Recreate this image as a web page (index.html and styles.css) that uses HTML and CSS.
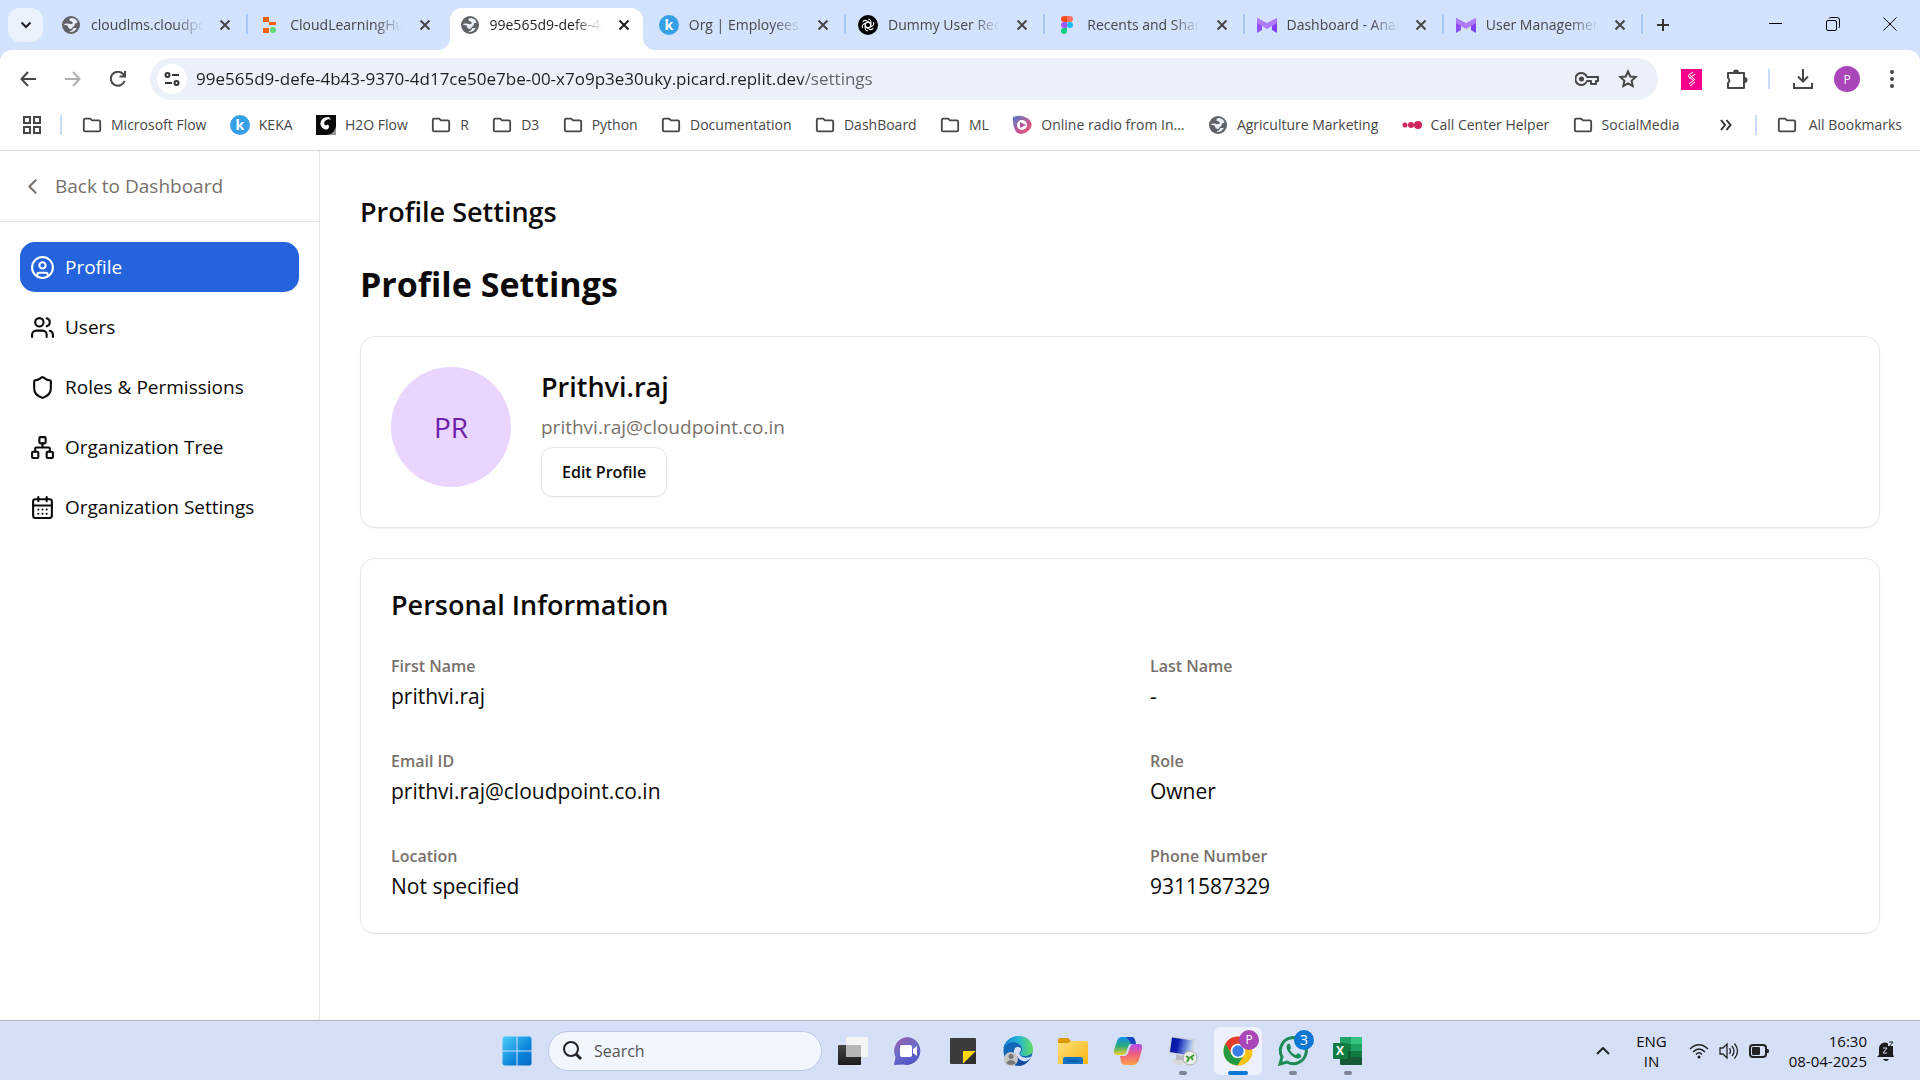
FILE: index.html
```html
<!DOCTYPE html>
<html lang="en">
<head>
<meta charset="utf-8">
<title>Profile Settings</title>
<link rel="stylesheet" href="styles.css">
</head>
<body>
<svg class="sprite" aria-hidden="true">
  <symbol id="globe" viewBox="0 0 20 20"><circle cx="10" cy="10" r="9" fill="#5f6368"/><path d="M11 3C8.500 3 8 4.500 8.600 5.500c.6 1 2.400.7 3 1.700.5 1-.5 2-2 2-1.400 0-2.200-.6-3.600-.6-1.600 0-2.600.4-3 1.400 1.600.2 2.600 0 3.600.8 1 .9.300 2.200 1.600 2.800 1.500.6 3 .3 3.300-1 .3-1.200 1.700-1 2.200-2 .3-.8-.4-1.400.3-2 .8-.6 2.200-.2 2.600-1.300C15.800 5 13.500 3.200 11 3z" fill="#e9eef8"/><path d="M8.500 17c.4-1.200 1.600-1 2.500-1.600.9-.7.6-1.900 1.700-2.300 1.300-.4 2.200.3 3.300-.6-1 2.700-3.700 4.900-7.500 4.500z" fill="#e9eef8"/></symbol>
  <symbol id="folder" viewBox="0 0 22 18"><path d="M2 3.500V14.500A1.500 1.500 0 0 0 3.500 16h15a1.500 1.500 0 0 0 1.500-1.500v-9A1.500 1.500 0 0 0 18.500 4H11L9 2H3.500A1.500 1.500 0 0 0 2 3.500z" fill="none" stroke="#474747" stroke-width="2"/></symbol>
  <symbol id="close" viewBox="0 0 12 12"><path d="M1.500 1.500l9 9M10.500 1.500l-9 9" stroke="currentColor" stroke-width="2" fill="none"/></symbol>
  <symbol id="ribbon" viewBox="0 0 20 16"><path d="M0 1l5 3v9l-5 3z" fill="#8f50f5"/><path d="M20 1l-5 3v9l5 3z" fill="#7f3ff2"/><path d="M0 1l10 5 10-5v5l-10 6L0 6z" fill="#b07bfa"/></symbol>
</svg>

<header class="browser">
  <div class="tabstrip">
    <button class="tab-search" aria-label="Search tabs"><svg width="12" height="8" viewBox="0 0 12 8"><path d="M1.500 1.500L6 6l4.500-4.500" fill="none" stroke="#1f1f1f" stroke-width="2"/></svg></button>
    <nav class="tabs">
      <div class="tab"><svg class="fav"><use href="#globe"/></svg><a href="#">cloudlms.cloudpoint</a><button aria-label="Close tab"><svg><use href="#close"/></svg></button></div>
      <div class="tab no-line"><svg class="fav" viewBox="0 0 20 20"><path d="M3 2h6v5H3zM9 7h7v3H9zM3 13h6v5H3z" fill="#f26207"/><circle cx="13" cy="15" r="3" fill="#5fd97c"/></svg><a href="#">CloudLearningHub</a><button aria-label="Close tab"><svg><use href="#close"/></svg></button></div>
      <div class="tab active"><svg class="fav"><use href="#globe"/></svg><a href="#">99e565d9-defe-4b43</a><button aria-label="Close tab"><svg><use href="#close"/></svg></button></div>
      <div class="tab"><span class="fav keka">k</span><a href="#">Org | Employees D</a><button aria-label="Close tab"><svg><use href="#close"/></svg></button></div>
      <div class="tab"><svg class="fav" viewBox="0 0 20 20"><circle cx="10" cy="10" r="10"/><g fill="none" stroke="#fff"><path id="petal" d="M10 4a3 3 0 0 1 3 3v4l-3 2"/><use href="#petal" transform="rotate(60 10 10)"/><use href="#petal" transform="rotate(120 10 10)"/><use href="#petal" transform="rotate(180 10 10)"/><use href="#petal" transform="rotate(240 10 10)"/><use href="#petal" transform="rotate(300 10 10)"/></g></svg><a href="#">Dummy User Records</a><button aria-label="Close tab"><svg><use href="#close"/></svg></button></div>
      <div class="tab"><svg class="fav" viewBox="0 0 20 20"><path d="M10 1H7a3 3 0 0 0 0 6h3z" fill="#f24e1e"/><path d="M10 1h3a3 3 0 0 1 0 6h-3z" fill="#ff7262"/><path d="M10 7H7a3 3 0 0 0 0 6h3z" fill="#a259ff"/><circle cx="13" cy="10" r="3" fill="#1abcfe"/><path d="M10 13H7a3 3 0 1 0 3 3z" fill="#0acf83"/></svg><a href="#">Recents and Shared</a><button aria-label="Close tab"><svg><use href="#close"/></svg></button></div>
      <div class="tab"><svg class="fav"><use href="#ribbon"/></svg><a href="#">Dashboard - Analytics</a><button aria-label="Close tab"><svg><use href="#close"/></svg></button></div>
      <div class="tab"><svg class="fav"><use href="#ribbon"/></svg><a href="#">User Management</a><button aria-label="Close tab"><svg><use href="#close"/></svg></button></div>
    </nav>
    <button class="new-tab" aria-label="New tab"><svg width="14" height="14" viewBox="0 0 14 14"><path d="M7 1v12M1 7h12" stroke="#333" stroke-width="2"/></svg></button>
    <div class="window-controls">
      <button aria-label="Minimize"><svg width="14" height="14" viewBox="0 0 14 14"><path d="M0 6.500h13" stroke="#000"/></svg></button>
      <button aria-label="Restore"><svg width="14" height="14" viewBox="0 0 14 14" fill="none" stroke="#000"><rect x=".5" y="3.500" width="10" height="10" rx="1.500"/><path d="M3 1.500Q3.500.5 5 .5h6A2.500 2.500 0 0 1 13.500 3v6q0 1.500-1 2"/></svg></button>
      <button aria-label="Close"><svg width="14" height="14" viewBox="0 0 14 14"><path d="M.5.5l13 13M13.500.5l-13 13" stroke="#000"/></svg></button>
    </div>
  </div>

  <div class="toolbar">
    <button aria-label="Back"><svg width="16" height="16" viewBox="0 0 16 16"><path d="M16 8H1.500M8 1L1.500 8 8 15" fill="none" stroke="#474747" stroke-width="2"/></svg></button>
    <button aria-label="Forward"><svg width="16" height="16" viewBox="0 0 16 16"><path d="M0 8h14.500M8 1l6.500 7L8 15" fill="none" stroke="#b0b0b0" stroke-width="2"/></svg></button>
    <button aria-label="Reload"><svg width="16" height="16" viewBox="0 0 16 16"><path d="M14.500 10A7 7 0 1 1 13 3l2 2M15 0v5.500H9.500" fill="none" stroke="#474747" stroke-width="2"/></svg></button>
    <div class="omnibox">
      <button class="site-info" aria-label="View site information"><svg width="16" height="16" viewBox="0 0 16 16" fill="none" stroke="#333" stroke-width="2"><circle cx="3.500" cy="4" r="2"/><path d="M8 4h7M1 12h7"/><circle cx="12.500" cy="12" r="2"/></svg></button>
      <input class="url" type="text" aria-label="Address" value="99e565d9-defe-4b43-9370-4d17ce50e7be-00-x7o9p3e30uky.picard.replit.dev/settings">
      <button aria-label="Passwords"><svg width="24" height="16" viewBox="0 0 24 16" fill="none" stroke="#474747" stroke-width="2"><path d="M12 6a6 6 0 1 0 0 4h4v3h5v-3h2V6z" stroke-linejoin="round"/><circle cx="6.500" cy="8" r="1.500" fill="#474747"/></svg></button>
      <button aria-label="Bookmark"><svg width="20" height="20" viewBox="0 0 20 20"><path d="M10 2.500l2.300 5 5.300.6-4 3.700 1.100 5.300L10 14.400l-4.700 2.700 1.100-5.300-4-3.700 5.300-.6z" fill="none" stroke="#474747" stroke-width="2"/></svg></button>
    </div>
    <button aria-label="Extension"><svg width="21" height="21" viewBox="0 0 21 21"><path d="M0 0h21v21H0z" fill="#f7008e"/><path d="M12 3L7 6.500M14 5L8 9.500M7 7l6 5M9 6.500l5 4.500M13 11l-5 4M14 13l-5 4" fill="none" stroke="#fff" stroke-width="1"/></svg></button>
    <button aria-label="Extensions"><svg width="22" height="22" viewBox="0 0 22 22"><path d="M2 5h16v15H2v-5a3 3 0 0 0 0-5z" fill="none" stroke="#474747" stroke-width="2" stroke-linejoin="round"/><path d="M7 4.500q0-3 3-3t3 3zM18.500 9q3 0 3 3t-3 3z" fill="#474747"/></svg></button>
    <span class="divider"></span>
    <button aria-label="Downloads"><svg width="22" height="22" viewBox="0 0 22 22"><path d="M11 1v12M6 8.500l5 5 5-5M2 15v5h18v-5" fill="none" stroke="#474747" stroke-width="2"/></svg></button>
    <button class="account" aria-label="Account">P</button>
    <button aria-label="Menu"><svg width="6" height="20" viewBox="0 0 6 20" fill="#474747"><circle cx="3" cy="3" r="2"/><circle cx="3" cy="10" r="2"/><circle cx="3" cy="17" r="2"/></svg></button>
  </div>

  <nav class="bookmarks">
    <button aria-label="Apps"><svg width="18" height="18" viewBox="0 0 18 18" fill="none" stroke="#474747" stroke-width="2"><path d="M1 1h6v6H1zM11 1h6v6h-6zM1 11h6v6H1zM11 11h6v6h-6z"/></svg></button>
    <span class="divider"></span>
    <div class="links">
      <a href="#"><svg><use href="#folder"/></svg>Microsoft Flow</a>
      <a href="#"><span class="fav keka">k</span>KEKA</a>
      <a href="#"><svg viewBox="0 0 20 20"><path d="M0 0h20v20H0z" fill="#0a0a0a"/><path d="M13 2C6 2 3 7 5 11s7 5 8 1c0-2-1-3-2-2-2 1-4-1-2-4 2-2 5-2 6-1z" fill="#fff"/><path d="M10 20c6 0 9-4 10-9v9z" fill="#999"/></svg>H2O Flow</a>
      <a href="#"><svg><use href="#folder"/></svg>R</a>
      <a href="#"><svg><use href="#folder"/></svg>D3</a>
      <a href="#"><svg><use href="#folder"/></svg>Python</a>
      <a href="#"><svg><use href="#folder"/></svg>Documentation</a>
      <a href="#"><svg><use href="#folder"/></svg>DashBoard</a>
      <a href="#"><svg><use href="#folder"/></svg>ML</a>
      <a href="#"><svg viewBox="0 0 20 20"><defs><linearGradient id="radio" x2="1" y2="1"><stop stop-color="#4b7fd0"/><stop offset=".6" stop-color="#c9588f"/><stop offset="1" stop-color="#f2566b"/></linearGradient></defs><path d="M1 2q7-3 14 1c6 4 6 9 1 13-5 4-11 4-13-1Q0 8 1 2z" fill="url(#radio)"/><circle cx="10" cy="10" r="5" fill="#fff"/><path d="M8 7l6 3-6 3z" fill="#b35a9c"/></svg>Online radio from In...</a>
      <a href="#"><svg><use href="#globe"/></svg>Agriculture Marketing</a>
      <a href="#"><svg viewBox="0 0 20 20" fill="#d0245f"><circle cx="3" cy="10" r="2.500"/><circle cx="9" cy="10" r="3"/><circle cx="16" cy="10" r="4"/></svg>Call Center Helper</a>
      <a href="#"><svg><use href="#folder"/></svg>SocialMedia</a>
    </div>
    <button class="more" aria-label="More bookmarks"><svg width="12" height="12" viewBox="0 0 12 12"><path d="M1 1l4 5-4 5M6.500 1l4 5-4 5" fill="none" stroke="#333" stroke-width="2"/></svg></button>
    <span class="divider"></span>
    <a class="all" href="#"><svg><use href="#folder"/></svg>All Bookmarks</a>
  </nav>
</header>

<div class="app">
  <aside class="sidebar">
    <a class="back" href="#"><svg width="25" height="25" viewBox="0 0 24 24"><path d="M15 18l-6-6 6-6"/></svg>Back to Dashboard</a>
    <nav class="menu">
      <a class="current" href="#"><svg viewBox="0 0 24 24"><circle cx="12" cy="12" r="10"/><circle cx="12" cy="10" r="3"/><path d="M7 20.662V19a2 2 0 0 1 2-2h6a2 2 0 0 1 2 2v1.662"/></svg>Profile</a>
      <a href="#"><svg viewBox="0 0 24 24"><path d="M16 21v-2a4 4 0 0 0-4-4H6a4 4 0 0 0-4 4v2"/><circle cx="9" cy="7" r="4"/><path d="M22 21v-2a4 4 0 0 0-3-3.870M16 3.130a4 4 0 0 1 0 7.750"/></svg>Users</a>
      <a href="#"><svg viewBox="0 0 24 24"><path d="M20 13c0 5-3.500 7.500-7.660 8.950a1 1 0 0 1-.67-.01C7.500 20.500 4 18 4 13V6a1 1 0 0 1 1-1c2 0 4.500-1.200 6.240-2.720a1.170 1.170 0 0 1 1.520 0C14.510 3.810 17 5 19 5a1 1 0 0 1 1 1z"/></svg>Roles &amp; Permissions</a>
      <a href="#"><svg viewBox="0 0 24 24"><rect x="16" y="16" width="6" height="6" rx="1"/><rect x="2" y="16" width="6" height="6" rx="1"/><rect x="9" y="2" width="6" height="6" rx="1"/><path d="M5 16v-3a1 1 0 0 1 1-1h12a1 1 0 0 1 1 1v3M12 12V8"/></svg>Organization Tree</a>
      <a href="#"><svg viewBox="0 0 24 24"><path d="M8 2v4M16 2v4"/><rect x="3" y="4" width="18" height="18" rx="2"/><path d="M3 10h18M8 14h.01M12 14h.01M16 14h.01M8 18h.01M12 18h.01M16 18h.01"/></svg>Organization Settings</a>
    </nav>
  </aside>

  <main class="content">
    <h2>Profile Settings</h2>
    <h1>Profile Settings</h1>
    <section class="card profile">
      <div class="avatar">PR</div>
      <div class="identity">
        <h2>Prithvi.raj</h2>
        <p>prithvi.raj@cloudpoint.co.in</p>
        <button>Edit Profile</button>
      </div>
    </section>
    <section class="card">
      <h2>Personal Information</h2>
      <dl class="fields">
        <div><dt>First Name</dt><dd>prithvi.raj</dd></div>
        <div><dt>Last Name</dt><dd>-</dd></div>
        <div><dt>Email ID</dt><dd>prithvi.raj@cloudpoint.co.in</dd></div>
        <div><dt>Role</dt><dd>Owner</dd></div>
        <div><dt>Location</dt><dd>Not specified</dd></div>
        <div><dt>Phone Number</dt><dd>9311587329</dd></div>
      </dl>
    </section>
  </main>
</div>

<footer class="taskbar">
  <div class="launcher">
    <button aria-label="Start"><svg viewBox="0 0 30 30"><defs><linearGradient id="win" x2="1" y2="1"><stop stop-color="#4fd0fb"/><stop offset=".6" stop-color="#0b86dc"/><stop offset="1" stop-color="#0468c4"/></linearGradient></defs><path d="M2 .5h12.500v14H.5V2zM15.500.5H28L29.500 2v12.500h-14zM.5 15.500h14v14H2L.5 28zM15.500 15.500h14V28L28 29.500H15.500z" fill="url(#win)"/></svg></button>
    <label class="search"><svg width="20" height="20" viewBox="0 0 20 20" fill="none" stroke="#222" stroke-width="2"><circle cx="9" cy="8" r="7"/><path d="M14 13l5 5" stroke-width="3"/></svg><input type="text" placeholder="Search" aria-label="Search"></label>
    <button aria-label="Task view"><svg viewBox="0 0 30 30"><defs><linearGradient id="tv" x2="0" y2="1"><stop stop-color="#444"/><stop offset="1" stop-color="#1c1c1c"/></linearGradient></defs><rect y="9" width="23" height="20" rx="1" fill="url(#tv)"/><rect x="8" y="1" width="22" height="20" rx="1" fill="#f4f4f4"/><path d="M8 9h15v12H8z" fill="#b5b5b5"/></svg></button>
    <button aria-label="Chat"><svg viewBox="0 0 30 30"><defs><linearGradient id="chat" x1=".2" x2=".7" y2="1"><stop stop-color="#9362ad"/><stop offset=".5" stop-color="#6b6ccb"/><stop offset="1" stop-color="#4f52c7"/></linearGradient></defs><path d="M15 1a14 14 0 1 1-5 27.500L1 29l1.500-8A14 14 0 0 1 15 1z" fill="url(#chat)"/><rect x="7" y="9" width="12" height="12" rx="2" fill="#fff"/><path d="M20 13l4-3v10l-4-3z" fill="#fff"/></svg></button>
    <button aria-label="Sticky notes"><svg viewBox="0 0 30 30"><rect x="2" y="2" width="26" height="26" rx="1" fill="#3b3b3b"/><path d="M15 28V15h13z" fill="#ffd60a"/><path d="M15 28l13-13v13z" fill="#2e2e2e"/></svg></button>
    <button aria-label="Edge"><svg viewBox="0 0 30 30"><defs><linearGradient id="edge" x2="1"><stop stop-color="#1577d0"/><stop offset=".5" stop-color="#22b4d8"/><stop offset="1" stop-color="#62dd5a"/></linearGradient></defs><circle cx="15" cy="15" r="14.500" fill="#1367ba"/><path d="M0 14C1 5 8 0 16 0c9 0 14 7 14 13 0 5-4 7-8 7-3 0-5-1-5-2 0-2 2-2 2-5 0-4-4-7-9-7-5 1-9 4-10 8z" fill="url(#edge)"/><path d="M12 12c2-2 6-1 6 1 0 3-3 4-1 6 3 4 9 3 12 1-3 5-7 7-10 5-7-2-10-7-7-13z" fill="#d5e0f7"/><path d="M14 20c3 6 9 7 13 3-5 8-15 9-19 3z" fill="#0d4ba0"/><circle cx="8" cy="23" r="7" fill="#c7c4c1"/><circle cx="8" cy="20.500" r="2.500" fill="#777"/><path d="M3 27q5-6 10 0-5 4-10 0z" fill="#777"/></svg></button>
    <button aria-label="File Explorer"><svg viewBox="0 0 30 30"><defs><linearGradient id="fe" x2="1" y2="1"><stop stop-color="#ffe07a"/><stop offset="1" stop-color="#fbb614"/></linearGradient></defs><path d="M0 4q0-2 2-2h8l3 3v4H0z" fill="#dd9a08"/><path d="M0 7h10l3-2h15q2 0 2 2v21H0z" fill="url(#fe)"/><path d="M5 28v-5q0-2 2-2h16q2 0 2 2v5z" fill="#1372c4"/><path d="M9 25h12" stroke="#0a4a8e" stroke-width="1"/></svg></button>
    <button aria-label="Copilot"><svg viewBox="0 0 30 30"><defs><linearGradient id="c1" x2="0" y2="1"><stop stop-color="#198ef0"/><stop offset=".5" stop-color="#28ac78"/><stop offset="1" stop-color="#f3d032"/></linearGradient><linearGradient id="c2" x2="0" y2="1"><stop stop-color="#b04bf0"/><stop offset=".5" stop-color="#f2607a"/><stop offset="1" stop-color="#fba24d"/></linearGradient></defs><path d="M13 1h6q2 0 3 3l1 4h-5q-2 0-3 3l-2 6q-1 2-3 2H4q-4 0-3-5l3-9q1-4 5-4z" fill="url(#c1)"/><path d="M13 1h6q2 0 3 3l1 4h-5l-2-4z" fill="#1646be"/><path d="M17 29h-5q-3 0-4-3l-1-6h5q2 0 3-3l2-6q1-3 4-3h5q4 0 3 5l-3 11q-2 5-6 5z" fill="url(#c2)"/></svg></button>
    <button class="running" aria-label="Remote Desktop"><svg viewBox="0 0 30 30"><defs><linearGradient id="rd" x2="1" y2=".2"><stop stop-color="#0413a5"/><stop offset=".4" stop-color="#0a1fb0"/><stop offset="1" stop-color="#b4d1f7"/></linearGradient></defs><ellipse cx="11" cy="25" rx="7" ry="4" fill="#d8d8dc"/><path d="M8 17h8v7H8z" fill="#b9bcc5"/><path d="M3 0l24 3-3 19L0 17z" fill="#cfd3da"/><path d="M4 1.500l21 3-2.500 15L2 16z" fill="url(#rd)"/><circle cx="22" cy="22" r="7" fill="#eee" stroke="#aaa"/><path d="M18 20l3 2-2 4M26 19l-3 2 2 3" fill="none" stroke="#3a9a2c" stroke-width="2"/></svg></button>
    <button class="running focused" aria-label="Chrome"><svg viewBox="0 0 30 30"><circle cx="15" cy="15" r="14.500" fill="#fbc116"/><path d="M2.400 7.700A14.500 14.500 0 0 1 27.600 7.700H15a7.300 7.300 0 0 0-6.300 11z" fill="#e33b2e"/><path d="M2.400 7.700a14.500 14.500 0 0 0 12 21.800l6.900-11a7.300 7.300 0 0 1-12.600 0z" fill="#249a45"/><circle cx="15" cy="15" r="7.300" fill="#fff"/><circle cx="15" cy="15" r="5.700" fill="#3a7ee8"/></svg><span class="badge purple">P</span></button>
    <button class="running" aria-label="WhatsApp"><svg viewBox="0 0 30 30" fill="none" stroke="#1d8b54" stroke-width="3"><path d="M2 28l2-7A13 13 0 1 1 9 26z"/><path d="M9 9q1-2 3-1l1 4-1 2q2 4 6 5l2-2 3 2q1 2-1 3-4 2-10-4-5-6-3-9z" fill="#1d8b54" stroke="none"/></svg><span class="badge blue">3</span></button>
    <button class="running" aria-label="Excel"><span class="excel"><svg viewBox="0 0 30 30"><path d="M7 1h11v9H7z" fill="#21a366"/><path d="M18 1h10q1 0 1 1v6H18z" fill="#33c481"/><path d="M7 8h11v7H7z" fill="#107c41"/><path d="M18 8h11v7H18z" fill="#21a366"/><path d="M7 15h11v6H7z" fill="#0e5c37"/><path d="M18 15h11v6H18z" fill="#107c41"/><path d="M7 21h22v8H8q-1 0-1-1z" fill="#185c37"/><rect y="7" width="15" height="16" rx="1" fill="#107c41"/></svg><b>X</b></span></button>
  </div>
  <div class="tray">
    <button aria-label="Show hidden icons"><svg width="14" height="8" viewBox="0 0 14 8"><path d="M1 7l6-6 6 6" fill="none" stroke="#222" stroke-width="2"/></svg></button>
    <span class="lang">ENG<br>IN</span>
    <span class="status">
      <svg width="20" height="16" viewBox="0 0 20 16" fill="none" stroke="#222"><path d="M1 6q9-8.500 18 0M4 9q6-6 12 0M7 11.500q3-3.500 6 0" stroke-width="1.500"/><circle cx="10" cy="14" r="1.500" fill="#222" stroke="none"/></svg>
      <svg width="20" height="18" viewBox="0 0 20 18" fill="none" stroke="#222" stroke-width="1.300"><path d="M1 6h3l4-4v14l-4-4H1zM10.500 6q2 3 0 6M13 4q4 5 0 10M15.500 1.500q6 7.500 0 15" /></svg>
      <svg width="20" height="14" viewBox="0 0 20 14"><rect x="1" y="1" width="16" height="12" rx="3" fill="none" stroke="#222" stroke-width="2"/><rect x="3" y="3" width="8" height="8" rx="1" fill="#222"/><path d="M18 5h1q1 0 1 2t-1 2h-1z" fill="#222"/></svg>
    </span>
    <time>16:30<br>08-04-2025</time>
    <svg width="18" height="20" viewBox="0 0 18 20"><path d="M2 14V8a6 6 0 0 1 9-5.500V5h5v9l1 2H0zM6 18h6q-1 2-3 2t-3-2z" fill="#1b1b1b"/><path d="M6 7h4l-4 5h4" fill="none" stroke="#d5e0f7" stroke-width="1"/><path d="M12 1h4l-4 5h4" fill="none" stroke="#1b1b1b" stroke-width="1"/></svg>
  </div>
</footer>
</body>
</html>
```
FILE: styles.css
```css
* { box-sizing: border-box; }
body {
  margin: 0;
  min-height: 100vh;
  display: flex;
  flex-direction: column;
  font-family: "Open Sans", "Noto Sans", sans-serif;
  color: #0c0a09;
  background: #fff;
}
h1, h2, p, dl, dd { margin: 0; }
a { color: inherit; text-decoration: none; }
button {
  display: flex;
  align-items: center;
  justify-content: center;
  flex: none;
  padding: 0;
  border: 0;
  background: none;
  font: inherit;
  color: inherit;
}
svg { flex: none; }
.sprite { position: absolute; width: 0; height: 0; }

/* Browser window */
.browser { background: #d3e2fd; border-bottom: 1px solid #dcdcdc; }
.tabstrip { display: flex; height: 50px; padding-left: 8px; }
.tab-search {
  width: 35px;
  height: 34px;
  margin-top: 8px;
  border-radius: 12px;
  background: #ebf2fe;
}
.tabs {
  flex: 1;
  display: grid;
  grid-template-columns: repeat(8, minmax(0, 1fr));
  padding-left: 8px;
}
.tab {
  position: relative;
  display: flex;
  align-items: center;
  gap: 10px;
  height: 42px;
  margin: 8px 6px 0 0;
  padding: 0 13px 8px 10px;
  font-size: 14px;
  line-height: 20px;
  color: #474747;
}
.tab:not(.active):not(.no-line)::after {
  content: "";
  position: absolute;
  right: -4px;
  top: 6px;
  width: 2px;
  height: 20px;
  background: #a8c7fa;
}
.tab a {
  flex: 1;
  min-width: 0;
  overflow: hidden;
  white-space: nowrap;
  -webkit-mask-image: linear-gradient(90deg, #000 75%, transparent);
  mask-image: linear-gradient(90deg, #000 75%, transparent);
}
.tab button { width: 12px; margin-left: 6px; }
.tab button svg { width: 12px; height: 12px; }
.tab.active { background: #fff; border-radius: 12px 12px 0 0; color: #1f1f1f; }
.tab.active::before,
.tab.active::after {
  content: "";
  position: absolute;
  bottom: 0;
  width: 12px;
  height: 12px;
}
.tab.active::before { left: -12px; background: radial-gradient(circle at 0 0, transparent 12px, #fff 12px); }
.tab.active::after { right: -12px; background: radial-gradient(circle at 100% 0, transparent 12px, #fff 12px); }
.fav { width: 20px; height: 20px; flex: none; }
.keka {
  border-radius: 50%;
  background: #35a0e8;
  color: #fff;
  font-size: 14px;
  font-weight: 700;
  line-height: 19px;
  text-align: center;
}
.new-tab { width: 36px; height: 50px; }
.window-controls { display: flex; margin-left: 66px; margin-right: 2px; height: 48px; }
.window-controls button { width: 57px; }

.toolbar {
  display: flex;
  align-items: center;
  height: 58px;
  padding: 0 20px 0 5px;
  border-radius: 12px 12px 0 0;
  background: #fff;
}
.toolbar > button { width: 45px; height: 40px; }
.omnibox {
  flex: 1;
  display: flex;
  align-items: center;
  height: 42px;
  margin: 0 11px 0 10px;
  padding: 0 20px 0 7px;
  gap: 19px;
  border-radius: 21px;
  background: #ebf0f9;
}
.site-info { width: 30px; height: 30px; border-radius: 50%; background: #fff; }
.url {
  flex: 1;
  min-width: 0;
  margin-left: -10px;
  padding: 0;
  border: 0;
  outline: 0;
  font: 17px/24px "Open Sans", "Noto Sans", sans-serif;
  color: transparent;
  background: linear-gradient(90deg, #1f1f1f 607px, #5f6368 607px);
  -webkit-background-clip: text;
  background-clip: text;
}
.divider { flex: none; width: 2px; height: 20px; background: #c9dcfc; }
.toolbar .divider { margin: 0 10px 0 9px; }
.toolbar .account {
  width: 26px;
  height: 26px;
  margin: 0 9px;
  border-radius: 50%;
  background: #a846ba;
  color: #fff;
  font-size: 12px;
}
.toolbar > button:last-child { width: 36px; margin-left: 5px; margin-right: -10px; }

.bookmarks {
  display: flex;
  align-items: center;
  height: 42px;
  padding: 0 18px 8px 23px;
  background: #fff;
  color: #474747;
  font-size: 14px;
  line-height: 20px;
}
.bookmarks .divider { margin: 0 20px 0 19px; }
.bookmarks a { display: flex; align-items: center; gap: 9px; white-space: nowrap; }
.bookmarks a svg { width: 20px; height: 20px; }
.bookmarks .all { gap: 12px; }
.links { flex: 1; display: flex; justify-content: space-between; }
.bookmarks .more { margin: 0 4px 0 40px; }

/* Settings page */
.app { flex: 1; display: flex; }
.sidebar { width: 320px; flex: none; border-right: 1px solid #e7e5e4; }
.back {
  display: flex;
  align-items: center;
  gap: 10px;
  height: 71px;
  padding-left: 20px;
  border-bottom: 1px solid #e7e5e4;
  color: #78716c;
  font-size: 19px;
}
.sidebar svg {
  fill: none;
  stroke: currentColor;
  stroke-width: 2;
  stroke-linecap: round;
  stroke-linejoin: round;
}
.menu { display: grid; gap: 10px; padding: 20px; }
.menu a {
  display: flex;
  align-items: center;
  gap: 10px;
  height: 50px;
  padding: 0 10px;
  border-radius: 15px;
  font-size: 19px;
}
.menu svg { width: 25px; height: 25px; }
.menu .current { background: #2563dc; color: #fff; }

.content { flex: 1; padding: 41px 40px 40px; }
h2 { font-size: 27px; line-height: 40px; font-weight: 600; }
h1 { margin: 30px 0 29px; font-size: 34px; line-height: 45px; font-weight: 700; }
.card {
  padding: 30px;
  border: 1px solid #e7e5e4;
  border-radius: 15px;
  box-shadow: 0 1px 2px rgba(0, 0, 0, .05);
}
.card + .card { margin-top: 30px; padding: 26px 30px 24px; }
.profile { display: flex; gap: 30px; }
.avatar {
  width: 120px;
  height: 120px;
  border-radius: 50%;
  background: #e9d5ff;
  color: #6b21a8;
  font-size: 28px;
  line-height: 120px;
  text-align: center;
}
.identity p { margin: 5px 0; font-size: 19px; line-height: 30px; color: #78716c; }
.identity button {
  height: 50px;
  padding: 0 20px;
  border: 1px solid #e7e5e4;
  border-radius: 12px;
  background: #fff;
  box-shadow: 0 1px 2px rgba(0, 0, 0, .05);
  font-size: 16px;
  font-weight: 600;
}
.fields { display: grid; grid-template-columns: 1fr 1fr; gap: 30px 60px; margin-top: 29px; }
.fields dt { font-size: 16px; line-height: 25px; font-weight: 600; color: #78716c; }
.fields dd { font-size: 21px; line-height: 35px; padding-bottom: 5px; }

/* Taskbar */
.taskbar {
  display: grid;
  grid-template-columns: 1fr auto 1fr;
  align-items: center;
  height: 60px;
  border-top: 1px solid #a9b3c4;
  background: #d5e0f7;
}
.launcher { grid-column: 2; display: flex; align-items: center; gap: 7px; margin-right: 55px; }
.launcher button { position: relative; width: 48px; height: 48px; border-radius: 6px; }
.launcher button svg { width: 30px; height: 30px; }
.search {
  display: flex;
  align-items: center;
  gap: 12px;
  width: 274px;
  height: 40px;
  padding-left: 13px;
  border: 1px solid #bcc9e2;
  border-radius: 20px;
  background: #f2f6fe;
}
.search input {
  width: 200px;
  padding: 0;
  border: 0;
  outline: 0;
  background: none;
  font: 16px/24px "Open Sans", "Noto Sans", sans-serif;
}
.search input::placeholder { color: #555; opacity: 1; }
.running::after {
  content: "";
  position: absolute;
  bottom: 0;
  left: 20px;
  width: 8px;
  height: 4px;
  border-radius: 2px;
  background: #7d8494;
}
.launcher .focused { background: #ecf1fb; }
.focused::after { left: 14px; width: 20px; background: #0a78d4; }
.badge {
  position: absolute;
  top: 3px;
  right: 3px;
  width: 20px;
  height: 20px;
  border-radius: 50%;
  color: #fff;
  font-size: 12px;
  line-height: 20px;
}
.purple { background: #a846ba; }
.blue { background: #0a78d4; font-size: 14px; }
.excel { display: grid; align-items: center; }
.excel > * { grid-area: 1 / 1; }
.excel b { z-index: 1; padding-left: 3px; color: #fff; font-size: 12px; line-height: 20px; text-align: left; }
.tray {
  grid-column: 3;
  display: flex;
  align-items: center;
  justify-content: flex-end;
  gap: 10px;
  padding-right: 25px;
  font-size: 15px;
  line-height: 20px;
}
.lang { margin: 0 12px 0 16px; text-align: center; }
.status { display: flex; align-items: center; gap: 10px; margin-right: 10px; }
time { text-align: right; }
```
